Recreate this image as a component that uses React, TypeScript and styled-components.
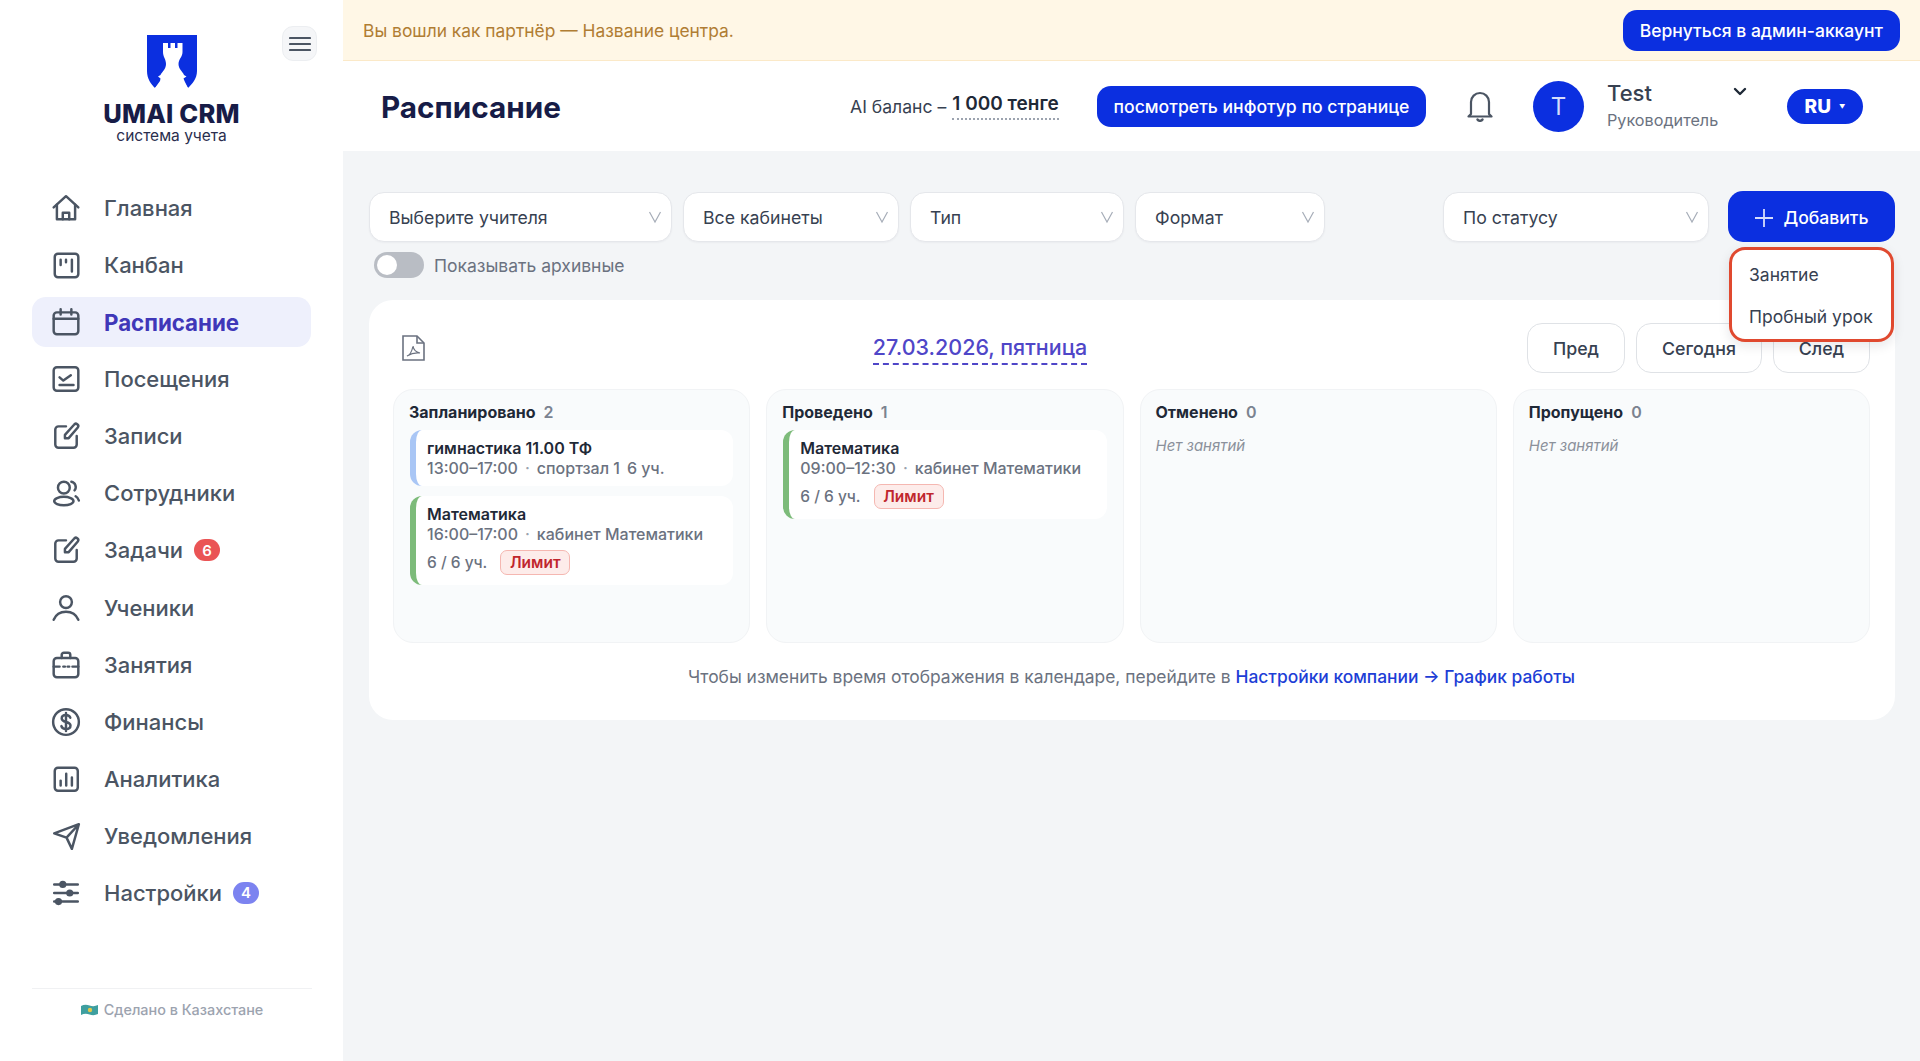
import type { ReactNode } from "react";
import styled, { createGlobalStyle } from "styled-components";

const GlobalStyle = createGlobalStyle`
  html, body {
    margin: 0;
    padding: 0;
    background: #fff;
    font-family: Inter, "Noto Sans", sans-serif;
  }
  * { box-sizing: border-box; }
`;

const icons: Record<string, ReactNode> = {
  home: (
    <>
      <path d="M2.5 13.5 14 3l11.5 10.5" />
      <path d="M5.5 11v13.5h17V11" />
      <path d="M11 24.5v-6h6v6" />
    </>
  ),
  kanban: (
    <>
      <rect x="3.5" y="3.5" width="22" height="22" rx="3" />
      <path d="M9 9v5M14 9v2.5M19.5 9v11" />
    </>
  ),
  calendar: (
    <>
      <rect x="2.5" y="5" width="23" height="20.5" rx="3" />
      <path d="M2.5 11h23M9 2v5M19 2v5" />
    </>
  ),
  check: (
    <>
      <rect x="2.5" y="3" width="23" height="22" rx="3" />
      <path d="M8 12.5l3.5 3 7-5M8 19.5h13" />
    </>
  ),
  pen: (
    <>
      <path d="M14 5H7a3 3 0 0 0-3 3v14a3 3 0 0 0 3 3h14a3 3 0 0 0 3-3v-8" />
      <path d="M13 16v-3L21.5 3.5a2 2 0 0 1 3.5 2.5L16.5 16Z" />
    </>
  ),
  users: (
    <>
      <circle cx="12" cy="9" r="5.5" />
      <path d="M19 3.5a5 5 0 0 1 3 8" />
      <ellipse cx="12" cy="21.5" rx="9" ry="4" />
      <path d="M23 17a6 6 0 0 1 3 4" />
    </>
  ),
  user: (
    <>
      <circle cx="14" cy="8.5" r="5.5" />
      <path d="M2.5 25c2-5 6-7.5 11.5-7.5S23.5 20 25.5 25" />
    </>
  ),
  case: (
    <>
      <rect x="2.5" y="7.5" width="23" height="18" rx="3" />
      <path d="M10 7.5V4.5a2 2 0 0 1 2-2h4a2 2 0 0 1 2 2v3" />
      <path d="M2.5 15.5H8M11.5 15.5H13M15.5 15.5H17M20 15.5h5.5" />
    </>
  ),
  dollar: (
    <>
      <circle cx="14" cy="14" r="12" />
      <path d="M18 10c-.5-1.5-2-2.5-4-2.5-2.5 0-4 1.3-4 3.2 0 4.3 8.200 2.300 8.200 6.500 0 2-1.700 3.300-4.200 3.300-2.200 0-3.800-1-4.300-2.700M14 5.500v17" />
    </>
  ),
  chart: (
    <>
      <rect x="3.5" y="3.5" width="21.5" height="21.5" rx="3" />
      <path d="M9 20v-4.5M14.2 20V9M19.5 20v-7.5" />
    </>
  ),
  send: <path d="M3 11.5 26 3l-6.500 23-5-10.500Zm11.500 4L26 3" />,
  sliders: (
    <>
      <path d="M3 6h22M3 14h22M3 22h22" />
      <circle cx="11" cy="6" r="2.2" fill="#4b5563" />
      <circle cx="17.5" cy="14" r="2.2" fill="#4b5563" />
      <circle cx="7" cy="22" r="2.2" fill="#4b5563" />
    </>
  ),
};

const navItems = [
  { label: "Главная", icon: "home" },
  { label: "Канбан", icon: "kanban" },
  { label: "Расписание", icon: "calendar", active: true },
  { label: "Посещения", icon: "check" },
  { label: "Записи", icon: "pen" },
  { label: "Сотрудники", icon: "users" },
  { label: "Задачи", icon: "pen", badge: "6", badgeColor: "#ea5455" },
  { label: "Ученики", icon: "user" },
  { label: "Занятия", icon: "case" },
  { label: "Финансы", icon: "dollar" },
  { label: "Аналитика", icon: "chart" },
  { label: "Уведомления", icon: "send" },
  { label: "Настройки", icon: "sliders", badge: "4", badgeColor: "#7c83f0" },
];

type Lesson = {
  title: string;
  time: string;
  room: string;
  seats: string;
  accent: string;
  limit?: boolean;
};

const columns: { title: string; lessons: Lesson[] }[] = [
  {
    title: "Запланировано",
    lessons: [
      { title: "гимнастика 11.00 ТФ", time: "13:00–17:00", room: "спортзал 1", seats: "6 уч.", accent: "#a9c6f5" },
      { title: "Математика", time: "16:00–17:00", room: "кабинет Математики", seats: "6 / 6 уч.", accent: "#7dbb7a", limit: true },
    ],
  },
  {
    title: "Проведено",
    lessons: [
      { title: "Математика", time: "09:00–12:30", room: "кабинет Математики", seats: "6 / 6 уч.", accent: "#7dbb7a", limit: true },
    ],
  },
  { title: "Отменено", lessons: [] },
  { title: "Пропущено", lessons: [] },
];

function Select({ label, width }: { label: string; width: number }) {
  return (
    <SelectBox $width={width}>
      {label}
      <SelectArrow viewBox="0 0 14 14">
        <path d="M1.5 2 7 12l5.5-10" />
      </SelectArrow>
    </SelectBox>
  );
}

function LessonCard({ lesson }: { lesson: Lesson }) {
  return (
    <LessonBox $accent={lesson.accent}>
      <LessonTitle>{lesson.title}</LessonTitle>
      <LessonMeta>
        {lesson.time}
        <Dot>·</Dot>
        {lesson.room}
        {!lesson.limit && <InlineSeats>{lesson.seats}</InlineSeats>}
      </LessonMeta>
      {lesson.limit && (
        <SeatsRow>
          {lesson.seats}
          <LimitBadge>Лимит</LimitBadge>
        </SeatsRow>
      )}
    </LessonBox>
  );
}

export default function App() {
  return (
    <Page>
      <GlobalStyle />
      <Sidebar>
        <BrandArea>
          <Brand>
            <svg width="50" height="53" viewBox="0 0 50 53">
              <path d="M0 0H50V36C50 44 45 49 41 53L36 46H14L8 53C4 49 0 44 0 36Z" fill="#0b2fe0" />
              <path
                d="M16 8H21V13H23.5V8H28V13H30.5V8H35.5V17C35.5 22 31.5 24 31.5 29C31.5 34 36 37 37 40L39.5 41.5L36.5 43.5L37.5 46L41 53H8L13 46L13.5 43.5L11 41.5L13.5 40C15 37 19 34 19 29C19 24 16 22 16 17Z"
                fill="#fff"
              />
            </svg>
            <BrandName>UMAI CRM</BrandName>
            <BrandTag>система учета</BrandTag>
          </Brand>
          <MenuButton>
            <svg width="22" height="16" viewBox="0 0 22 16">
              <path d="M1 2h20M1 8h20M1 14h20" stroke="#4b5563" strokeWidth="2.2" strokeLinecap="round" />
            </svg>
          </MenuButton>
        </BrandArea>

        <Nav>
          {navItems.map((item) => (
            <NavRow key={item.label} $active={item.active}>
              <NavIcon viewBox="0 0 28 28">{icons[item.icon]}</NavIcon>
              {item.label}
              {item.badge && <NavBadge $color={item.badgeColor}>{item.badge}</NavBadge>}
            </NavRow>
          ))}
        </Nav>

        <SidebarFooter>
          <svg width="17" height="12" viewBox="0 0 17 12">
            <path d="M0 2 Q4 0 8.5 1.5T17 1V10Q13 12 8.5 10.5T0 11Z" fill="#3e9f9f" />
            <circle cx="9" cy="6" r="2.2" fill="#e3c94a" />
          </svg>
          Сделано в Казахстане
        </SidebarFooter>
      </Sidebar>

      <Content>
        <Banner>
          Вы вошли как партнёр — Название центра.
          <BlueButton>Вернуться в админ-аккаунт</BlueButton>
        </Banner>

        <Header>
          <PageTitle>Расписание</PageTitle>
          <Balance>
            AI баланс – <BalanceValue>1 000 тенге</BalanceValue>
          </Balance>
          <TourButton>посмотреть инфотур по странице</TourButton>
          <BellIcon viewBox="0 0 26 32">
            <path d="M4 24V12a9 9 0 0 1 18 0v12l2.5 2.5h-23Z" />
            <path d="M10.5 29.5a3 3 0 0 0 5 0" strokeWidth="2.4" />
          </BellIcon>
          <Avatar>T</Avatar>
          <UserBlock>
            <UserName>Test</UserName>
            <UserRole>Руководитель</UserRole>
          </UserBlock>
          <UserChevron viewBox="0 0 14 10">
            <path d="M2 2l5 5 5-5" />
          </UserChevron>
          <LangPill>
            RU<LangCaret>▼</LangCaret>
          </LangPill>
        </Header>

        <Main>
          <Filters>
            <Select label="Выберите учителя" width={303} />
            <Select label="Все кабинеты" width={216} />
            <Select label="Тип" width={214} />
            <Select label="Формат" width={190} />
            <FiltersEnd>
              <Select label="По статусу" width={266} />
              <AddWrap>
                <AddButton>
                  <svg width="20" height="20" viewBox="0 0 20 20">
                    <path d="M10 1v18M1 10h18" stroke="#d6dcfb" strokeWidth="1.8" />
                  </svg>
                  Добавить
                </AddButton>
                <AddMenu>
                  <AddMenuItem>Занятие</AddMenuItem>
                  <AddMenuItem>Пробный урок</AddMenuItem>
                </AddMenu>
              </AddWrap>
            </FiltersEnd>
          </Filters>

          <ArchiveRow>
            <Toggle />
            Показывать архивные
          </ArchiveRow>

          <Card>
            <Toolbar>
              <PdfSlot>
                <svg width="23" height="26" viewBox="0 0 23 26" fill="none" stroke="#6b7280" strokeWidth="1.6">
                  <path d="M1 1h14l7 7v17H1Z" />
                  <path d="M15 1v7h7" />
                  <path d="M5 21c3-1 5-5 6-10 .5 4 3 6 7 7-4-.5-9 .5-13 3Z" strokeWidth="1.2" />
                </svg>
              </PdfSlot>
              <DateTitle>27.03.2026, пятница</DateTitle>
              <ToolbarButtons>
                <GhostButton $width={98}>Пред</GhostButton>
                <GhostButton $width={126}>Сегодня</GhostButton>
                <GhostButton $width={97}>След</GhostButton>
              </ToolbarButtons>
            </Toolbar>

            <Board>
              {columns.map((col) => (
                <Column key={col.title}>
                  <ColumnHead>
                    {col.title}
                    <ColumnCount>{col.lessons.length}</ColumnCount>
                  </ColumnHead>
                  {col.lessons.length === 0 && <EmptyNote>Нет занятий</EmptyNote>}
                  {col.lessons.map((lesson) => (
                    <LessonCard key={lesson.time} lesson={lesson} />
                  ))}
                </Column>
              ))}
            </Board>

            <Hint>
              Чтобы изменить время отображения в календаре, перейдите в{" "}
              <HintLink>Настройки компании → График работы</HintLink>
            </Hint>
          </Card>
        </Main>
      </Content>
    </Page>
  );
}

const Page = styled.div`
  display: flex;
  width: 1920px;
  height: 1061px;
  overflow: hidden;
`;

const Sidebar = styled.aside`
  display: flex;
  flex-direction: column;
  flex: 0 0 343px;
  padding: 0 31px 0 32px;
  background: #fff;
`;

const BrandArea = styled.div`
  position: relative;
  height: 175px;
  padding-top: 35px;
`;

const Brand = styled.div`
  display: flex;
  flex-direction: column;
  align-items: center;
  width: 279px;
  color: #171c47;
`;

const BrandName = styled.div`
  margin-top: 11px;
  font-size: 25.5px;
  font-weight: 800;
  line-height: 30px;
  letter-spacing: 0.2px;
`;

const BrandTag = styled.div`
  margin-top: -3px;
  font-size: 15.5px;
  line-height: 19px;
  color: #2a2e4e;
`;

const MenuButton = styled.button`
  position: absolute;
  top: 26px;
  right: -5px;
  display: flex;
  align-items: center;
  justify-content: center;
  width: 35px;
  height: 35px;
  padding: 0;
  border: 1px solid #eceef1;
  border-radius: 11px;
  background: #f5f6f8;
`;

const Nav = styled.nav`
  display: flex;
  flex-direction: column;
  gap: 7.08px;
  margin-top: 8px;
`;

const NavRow = styled.div<{ $active?: boolean }>`
  display: flex;
  align-items: center;
  width: 279px;
  height: 50px;
  padding-left: 19px;
  border-radius: 14px;
  background: ${(p) => (p.$active ? "#eef0fc" : "transparent")};
  color: ${(p) => (p.$active ? "#3f37b8" : "#4b5563")};
  font-size: ${(p) => (p.$active ? "22.3px" : "22px")};
  font-weight: ${(p) => (p.$active ? 700 : 500)};
`;

const NavIcon = styled.svg`
  flex: none;
  width: 30px;
  height: 30px;
  margin-right: 23px;
  fill: none;
  stroke: #4b5563;
  stroke-width: 2.3;
  stroke-linecap: round;
  stroke-linejoin: round;
`;

const NavBadge = styled.span<{ $color?: string }>`
  display: flex;
  align-items: center;
  justify-content: center;
  width: 26px;
  height: 22px;
  margin-left: 11px;
  border-radius: 11px;
  background: ${(p) => p.$color};
  color: #fff;
  font-size: 15px;
  font-weight: 600;
`;

const SidebarFooter = styled.div`
  display: flex;
  align-items: center;
  justify-content: center;
  gap: 6px;
  width: 280px;
  margin-top: auto;
  margin-bottom: 41px;
  padding-top: 11px;
  border-top: 1px solid #f0f1f3;
  color: #9ca3af;
  font-size: 14.4px;
  font-weight: 500;
  line-height: 20px;
`;

const Content = styled.div`
  display: flex;
  flex-direction: column;
  flex: 1;
  min-width: 0;
`;

const Banner = styled.div`
  display: flex;
  align-items: center;
  justify-content: space-between;
  height: 61px;
  padding: 0 20px;
  border-bottom: 1px solid #fbe9c8;
  background: #fff7e6;
  color: #b07d33;
  font-size: 17.4px;
`;

const BlueButton = styled.button`
  height: 41px;
  padding: 0 17px;
  border: 0;
  border-radius: 14px;
  background: #0b2fe0;
  color: #fff;
  font-family: inherit;
  font-size: 17.5px;
  font-weight: 500;
`;

const Header = styled.header`
  display: flex;
  align-items: center;
  height: 90px;
  padding-left: 38px;
  background: #fff;
`;

const PageTitle = styled.h1`
  width: 469px;
  margin: 2px 0 0;
  color: #171c47;
  font-size: 29.7px;
  font-weight: 700;
`;

const Balance = styled.div`
  display: flex;
  align-items: center;
  gap: 6px;
  width: 247px;
  color: #374151;
  font-size: 17.6px;
`;

const BalanceValue = styled.span`
  padding-bottom: 3px;
  border-bottom: 2px dotted #9ca3af;
  color: #1f2937;
  font-size: 19px;
  font-weight: 600;
`;

const TourButton = styled(BlueButton)`
  width: 329px;
  padding: 0;
  font-size: 17.6px;
`;

const BellIcon = styled.svg`
  width: 26px;
  height: 32px;
  margin-left: 41px;
  fill: none;
  stroke: #4b5563;
  stroke-width: 2.2;
  stroke-linejoin: round;
  stroke-linecap: round;
`;

const Avatar = styled.div`
  display: flex;
  align-items: center;
  justify-content: center;
  width: 51px;
  height: 51px;
  margin-left: 40px;
  border-radius: 50%;
  background: #0b2fe0;
  color: #d6dcfb;
  font-size: 24px;
`;

const UserBlock = styled.div`
  width: 124px;
  margin-left: 23px;
`;

const UserName = styled.div`
  margin-top: -3px;
  color: #374151;
  font-size: 22px;
  font-weight: 500;
  line-height: 30px;
`;

const UserRole = styled.div`
  color: #6b7280;
  font-size: 16.2px;
  line-height: 24px;
`;

const UserChevron = styled.svg`
  width: 14px;
  height: 10px;
  margin: -28px 0 0 2px;
  fill: none;
  stroke: #1f2937;
  stroke-width: 2.4;
  stroke-linecap: round;
  stroke-linejoin: round;
`;

const LangPill = styled.div`
  display: flex;
  align-items: center;
  justify-content: center;
  gap: 8px;
  width: 76px;
  height: 35px;
  margin-left: 40px;
  border-radius: 18px;
  background: #0b2fe0;
  color: #fff;
  font-size: 19px;
  font-weight: 800;
`;

const LangCaret = styled.span`
  font-size: 6px;
`;

const Main = styled.main`
  flex: 1;
  padding: 41px 25px 0 26px;
  background: #f3f5f7;
`;

const Filters = styled.div`
  display: flex;
  gap: 11px;
`;

const FiltersEnd = styled.div`
  display: flex;
  gap: 19px;
  margin-left: auto;
`;

const SelectBox = styled.div<{ $width: number }>`
  position: relative;
  display: flex;
  align-items: center;
  width: ${(p) => p.$width}px;
  height: 50px;
  padding-left: 19px;
  border: 1px solid #e5e7eb;
  border-radius: 15px;
  background: #fff;
  box-shadow: 0 1px 2px rgba(15, 23, 42, 0.04);
  color: #374151;
  font-size: 17.7px;
`;

const SelectArrow = styled.svg`
  position: absolute;
  top: 17px;
  right: 9px;
  width: 14px;
  height: 14px;
  fill: none;
  stroke: #a6adb8;
  stroke-width: 1.2;
`;

const AddWrap = styled.div`
  position: relative;
`;

const AddButton = styled.button`
  display: flex;
  align-items: center;
  justify-content: center;
  gap: 9px;
  width: 167px;
  height: 51px;
  margin-top: -1px;
  padding: 2px 0 0;
  border: 0;
  border-radius: 15px;
  background: #0b2fe0;
  color: #fff;
  font-family: inherit;
  font-size: 17.6px;
  font-weight: 500;
`;

const AddMenu = styled.div`
  position: absolute;
  z-index: 5;
  top: 55px;
  left: 1px;
  display: flex;
  flex-direction: column;
  width: 165px;
  height: 95px;
  padding: 4px 0 0 17px;
  border: 3px solid #e0492f;
  border-radius: 16px;
  background: #fff;
  box-shadow: 0 4px 12px rgba(15, 23, 42, 0.1);
`;

const AddMenuItem = styled.div`
  height: 42px;
  color: #374151;
  font-size: 17.5px;
  line-height: 42px;
  white-space: nowrap;
`;

const ArchiveRow = styled.div`
  display: flex;
  align-items: center;
  gap: 10px;
  height: 26px;
  margin-top: 10px;
  padding-left: 5px;
  color: #6b7280;
  font-size: 17.5px;
`;

const Toggle = styled.span`
  position: relative;
  width: 50px;
  height: 26px;
  border-radius: 13px;
  background: #b9bdc4;

  &::after {
    content: "";
    position: absolute;
    top: 3px;
    left: 3px;
    width: 20px;
    height: 20px;
    border-radius: 50%;
    background: #fff;
  }
`;

const Card = styled.section`
  height: 420px;
  margin-top: 22px;
  padding: 23px 25px 0 24px;
  border-radius: 24px;
  background: #fff;
`;

const Toolbar = styled.div`
  display: flex;
  align-items: center;
  justify-content: space-between;
  height: 50px;
`;

const PdfSlot = styled.div`
  display: flex;
  width: 40px;
  padding-left: 9px;
`;

const DateTitle = styled.div`
  margin-top: 3px;
  padding-bottom: 3px;
  border-bottom: 2px dashed #4f46c8;
  color: #4f46c8;
  font-size: 21.5px;
  font-weight: 500;
`;

const ToolbarButtons = styled.div`
  display: flex;
  gap: 11px;
`;

const GhostButton = styled.button<{ $width: number }>`
  width: ${(p) => p.$width}px;
  height: 50px;
  padding: 0;
  border: 1px solid #dfe2e6;
  border-radius: 15px;
  background: #fff;
  color: #374151;
  font-family: inherit;
  font-size: 17.8px;
  font-weight: 500;
`;

const Board = styled.div`
  display: grid;
  grid-template-columns: repeat(4, 1fr);
  gap: 16px;
  margin-top: 16px;
`;

const Column = styled.div`
  display: flex;
  flex-direction: column;
  gap: 10px;
  height: 254px;
  padding: 10px 16px 12px 15px;
  border: 1px solid #f1f3f5;
  border-radius: 20px;
  background: #f9fbfc;
`;

const ColumnHead = styled.div`
  display: flex;
  gap: 8px;
  height: 20px;
  color: #1f2937;
  font-size: 16px;
  font-weight: 700;
  line-height: 24px;
`;

const ColumnCount = styled.span`
  color: #7b8390;
  font-weight: 600;
`;

const EmptyNote = styled.div`
  margin-top: 6px;
  color: #8b919b;
  font-size: 15px;
  font-style: italic;
`;

const LessonBox = styled.div<{ $accent: string }>`
  margin-left: 1px;
  padding: 8px 12px 8px 11px;
  border-left: 6px solid ${(p) => p.$accent};
  border-radius: 12px;
  background: #fff;
`;

const LessonTitle = styled.div`
  color: #1f2937;
  font-size: 16px;
  font-weight: 600;
  line-height: 20px;
`;

const LessonMeta = styled.div`
  color: #6b7280;
  font-size: 16px;
  font-weight: 500;
  line-height: 20px;
  white-space: nowrap;
`;

const Dot = styled.span`
  margin: 0 7px;
  color: #9ca3af;
`;

const InlineSeats = styled.span`
  margin-left: 7px;
`;

const SeatsRow = styled.div`
  display: flex;
  align-items: center;
  gap: 13px;
  margin: 6px 0 2px;
  color: #6b7280;
  font-size: 15.5px;
  font-weight: 500;
`;

const LimitBadge = styled.span`
  display: flex;
  align-items: center;
  justify-content: center;
  width: 70px;
  height: 25px;
  border: 1px solid #f5b7b1;
  border-radius: 7px;
  background: #fdecea;
  color: #c0262d;
  font-size: 15.5px;
  font-weight: 600;
`;

const Hint = styled.p`
  margin: 22px 0 0;
  color: #6b7280;
  font-size: 17.4px;
  line-height: 24px;
  text-align: center;
`;

const HintLink = styled.span`
  color: #1d3ed6;
  font-weight: 500;
`;
